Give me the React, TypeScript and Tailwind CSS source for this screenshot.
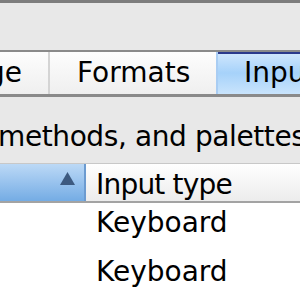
const App = () => {
  return (
    <div
      className="w-[300px] h-[300px] overflow-hidden bg-white relative"
      style={{ fontFamily: '"DejaVu Sans", "Liberation Sans", sans-serif' }}
    >
      {/* title area */}
      <div className="h-[50px] bg-[#e8e8e8] border-t-[3px] border-[#7d7d7d]" />

      {/* tab bar */}
      <div className="h-[47px] flex border-t-[2px] border-b-[3px] border-[#8a8a8a] bg-gradient-to-b from-[#fdfdfd] to-[#efefef] text-[28px] text-black leading-none">
        <div className="w-[50px] shrink-0 flex items-center justify-end pr-[26px] border-r-[2px] border-[#d4d4d4] whitespace-nowrap">
          ge
        </div>
        <div className="w-[166px] shrink-0 flex items-center pl-[27px]">Formats</div>
        <div className="flex-1 flex items-center pl-[26px] border-l-[2px] border-[#a9cdf3] bg-gradient-to-b from-[#d2e8fd] via-[#a6d2fa] to-[#c9e4fc] shadow-[inset_0_2px_0_#2b3a8c] whitespace-nowrap">
          Input Sources
        </div>
      </div>

      {/* description */}
      <div className="h-[66px] bg-[#e8e8e8] flex items-center text-[28px] text-black whitespace-nowrap pt-[13px] tracking-[-0.4px]">
        <span className="-ml-[2px]">methods, and palettes</span>
      </div>

      {/* table header */}
      <div className="h-[40px] flex border-t border-[#c8c8c8] border-b-[2px] border-b-[#a3a3a3] text-[28px] text-black leading-none">
        <div className="w-[86px] shrink-0 relative bg-gradient-to-b from-[#bcd9f6] to-[#74ace4] border-r-[2px] border-[#6c9bd0]">
          <svg className="absolute left-[60px] top-[8px]" width="15" height="13" viewBox="0 0 15 13">
            <polygon points="7.5,0 15,13 0,13" fill="#3d5a80" />
          </svg>
        </div>
        <div className="flex-1 flex items-center pl-[10px] pt-[5px] bg-gradient-to-b from-[#ffffff] to-[#ececec] whitespace-nowrap tracking-[-0.8px]">
          Input type
        </div>
      </div>

      {/* rows */}
      <div className="text-[28px] text-black pl-[96px] whitespace-nowrap leading-none">
        <div className="h-[49px] flex items-center pb-[10px]">Keyboard</div>
        <div className="h-[49px] flex items-center pb-[10px]">Keyboard</div>
      </div>
    </div>
  );
};

export default App;
